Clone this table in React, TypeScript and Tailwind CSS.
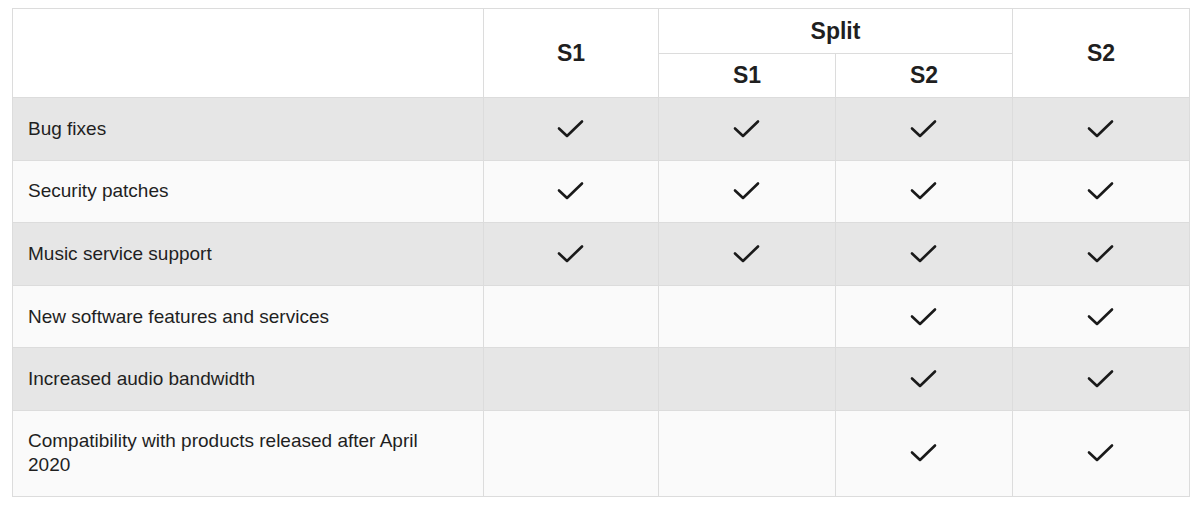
const rows = [
  { label: "Bug fixes", checks: [true, true, true, true] },
  { label: "Security patches", checks: [true, true, true, true] },
  { label: "Music service support", checks: [true, true, true, true] },
  { label: "New software features and services", checks: [false, false, true, true] },
  { label: "Increased audio bandwidth", checks: [false, false, true, true] },
  { label: "Compatibility with products released after April 2020", checks: [false, false, true, true] },
];

const Check = () => (
  <svg width="28" height="20" viewBox="0 0 28 20" className="mx-auto block">
    <path d="M2 9.5 L10 17 L25 2.5" fill="none" stroke="#1a1a1a" strokeWidth="2.6" strokeLinecap="round" strokeLinejoin="round" />
  </svg>
);

const App = () => {
  return (
    <div className="w-[1200px] h-[508px] bg-white pt-2 pl-3 font-['Liberation_Sans',Arial,sans-serif] text-[#1f1f1f]">
      <table className="table-fixed border-collapse w-[1177px]">
        <colgroup>
          <col className="w-[471px]" />
          <col className="w-[175px]" />
          <col className="w-[177px]" />
          <col className="w-[177px]" />
          <col className="w-[177px]" />
        </colgroup>
        <thead>
          <tr className="h-[45px]">
            <th rowSpan={2} className="border border-[#dcdcdc] bg-white"></th>
            <th rowSpan={2} className="border border-[#dcdcdc] bg-white text-[23px] font-bold">S1</th>
            <th colSpan={2} className="border border-[#dcdcdc] bg-white text-[23px] font-bold">Split</th>
            <th rowSpan={2} className="border border-[#dcdcdc] bg-white text-[23px] font-bold">S2</th>
          </tr>
          <tr className="h-[44px]">
            <th className="border border-[#dcdcdc] bg-white text-[23px] font-bold">S1</th>
            <th className="border border-[#dcdcdc] bg-white text-[23px] font-bold">S2</th>
          </tr>
        </thead>
        <tbody>
          {rows.map((r, i) => (
            <tr
              key={r.label}
              className={i % 2 === 0 ? "bg-[#e6e6e6]" : "bg-[#fafafa]"}
              style={{ height: i === rows.length - 1 ? 86 : 62.6 }}
            >
              <td className="border border-[#dcdcdc] pl-[15px] pr-[40px] text-[19px] leading-[24px]">{r.label}</td>
              {r.checks.map((c, j) => (
                <td key={j} className="border border-[#dcdcdc]">{c && <Check />}</td>
              ))}
            </tr>
          ))}
        </tbody>
      </table>
    </div>
  );
};

export default App;
